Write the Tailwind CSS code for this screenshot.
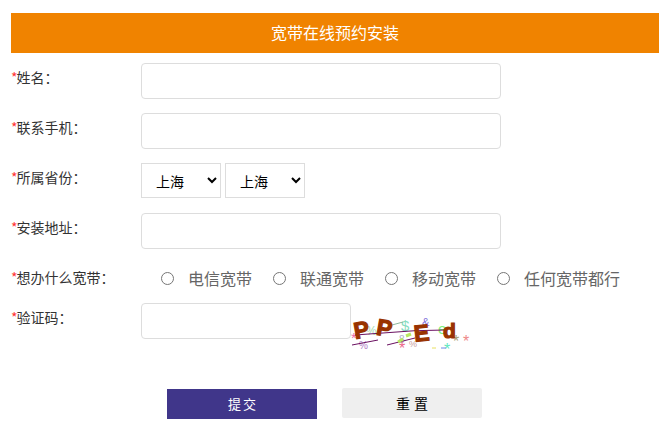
<!DOCTYPE html>
<html lang="zh-CN">
<head>
  <meta charset="UTF-8">
  <meta name="viewport" content="width=device-width, initial-scale=1.0">
  <title>宽带在线预约安装</title>
  <script src="https://cdn.jsdelivr.net/npm/@tailwindcss/browser@4"></script>
</head>
<body class="bg-white font-['Noto_Sans_CJK_SC','Liberation_Sans',sans-serif] overflow-hidden">
  <div class="w-[648px] ml-[11px] pt-[13px]">
    <h1 class="h-10 bg-[#f08300] text-white text-base font-normal text-center leading-[38px]">宽带在线预约安装</h1>

    <form class="pt-[10px]">
      <div class="flex h-[50px]">
        <label class="w-[130px] text-[14px] leading-[29px] text-[#333]"><span class="text-[#f33] mr-[-1px]">*</span>姓名：</label>
        <input type="text" class="w-[360px] h-9 border border-[#ddd] rounded-[4px] bg-white">
      </div>
      <div class="flex h-[50px]">
        <label class="w-[130px] text-[14px] leading-[29px] text-[#333]"><span class="text-[#f33] mr-[-1px]">*</span>联系手机：</label>
        <input type="text" class="w-[360px] h-9 border border-[#ddd] rounded-[4px] bg-white">
      </div>
      <div class="flex h-[50px]">
        <label class="w-[130px] text-[14px] leading-[29px] text-[#333]"><span class="text-[#f33] mr-[-1px]">*</span>所属省份：</label>
        <div class="flex gap-[4px]">
          <select class="w-20 h-[35px] border border-[#ddd] bg-white text-[14px] text-black pl-[10px] appearance-auto">
            <option>上海</option>
          </select>
          <select class="w-20 h-[35px] border border-[#ddd] bg-white text-[14px] text-black pl-[10px] appearance-auto">
            <option>上海</option>
          </select>
        </div>
      </div>
      <div class="flex h-[50px]">
        <label class="w-[130px] text-[14px] leading-[29px] text-[#333]"><span class="text-[#f33] mr-[-1px]">*</span>安装地址：</label>
        <input type="text" class="w-[360px] h-9 border border-[#ddd] rounded-[4px] bg-white">
      </div>
      <div class="flex h-10">
        <label class="w-[130px] text-[14px] leading-[29px] text-[#333]"><span class="text-[#f33] mr-[-1px]">*</span>想办什么宽带：</label>
        <div class="flex items-center h-[30px] pl-5 text-[16px] text-[#666] gap-[21px]">
          <span class="flex items-center gap-[14px]"><input type="radio" name="kd" class="w-[13px] h-[13px] m-0">电信宽带</span>
          <span class="flex items-center gap-[14px]"><input type="radio" name="kd" class="w-[13px] h-[13px] m-0">联通宽带</span>
          <span class="flex items-center gap-[14px]"><input type="radio" name="kd" class="w-[13px] h-[13px] m-0">移动宽带</span>
          <span class="flex items-center gap-[14px]"><input type="radio" name="kd" class="w-[13px] h-[13px] m-0">任何宽带都行</span>
        </div>
      </div>
      <div class="flex h-[85px]">
        <label class="w-[130px] text-[14px] leading-[29px] text-[#333]"><span class="text-[#f33] mr-[-1px]">*</span>验证码：</label>
        <input type="text" class="w-[210px] h-9 border border-[#ddd] rounded-[4px] bg-white">
        <!-- captcha -->
        <svg class="w-[120px] h-[44px] mt-3" viewBox="0 0 120 44" font-family="Liberation Sans, sans-serif">
          <text x="50" y="16" font-size="15" fill="#86dcc0">$</text>
          <text x="71" y="11" font-size="11" fill="#7a6ad8">&amp;</text>
          <text x="87" y="19" font-size="15" fill="#80f080">e</text>
          <text x="15" y="20" font-size="12" fill="#a8dcb0">%</text>
          <text x="8" y="34" font-size="10" fill="#b080c8">%</text>
          <text x="48" y="28" font-size="10" fill="#b0b0c8">8</text>
          <text x="58" y="32" font-size="9" fill="#c8a0a0">%</text>
          <text x="102" y="32" font-size="16" fill="#a8a070">*</text>
          <text x="112" y="32" font-size="16" fill="#e88">*</text>
          <text x="48" y="39" font-size="16" fill="#ee6688">*</text>
          <text x="93" y="40" font-size="16" fill="#60e8c0">*</text>
          <text x="0" y="28" font-size="15" fill="#ee66aa">*</text>
          <path d="M4 20 L64 15.7 L94 15 M1 30 L27 25 M36 30 L64 23" stroke="#6a1060" stroke-width="1" fill="none"/>
          <path d="M41 10 L52 7" stroke="#8ab8a0" stroke-width="1" fill="none"/>
          <path d="M47 27 L52 24 M55 21 L60 19" stroke="#b8e860" stroke-width="3" fill="none"/>
          <path d="M81 33 L85 33" stroke="#e8e060" stroke-width="1"/>
          <path d="M90 33 L95 33" stroke="#6a8ae8" stroke-width="1"/>
          <g font-size="23" font-weight="700" fill="#993300" stroke="#993300" stroke-width="1.2">
            <text x="3" y="23" transform="rotate(-10 10 16)">P</text>
            <text x="26" y="21" transform="rotate(10 34 12)">P</text>
            <text x="63" y="26" transform="rotate(-6 70 18)">E</text>
            <text x="92" y="23" font-size="21">d</text>
          </g>
        </svg>
      </div>
      <div class="flex">
        <button type="submit" class="ml-[156px] mt-px w-[150px] h-[30px] pl-[2px] bg-[#40368a] text-white text-[13px] tracking-[2px]">提交</button>
        <button type="reset" class="ml-[25px] w-[140px] h-[30px] pl-1 bg-[#efefef] rounded-[2px] text-black text-[14px] tracking-[4px]">重置</button>
      </div>
    </form>
  </div>
</body>
</html>
